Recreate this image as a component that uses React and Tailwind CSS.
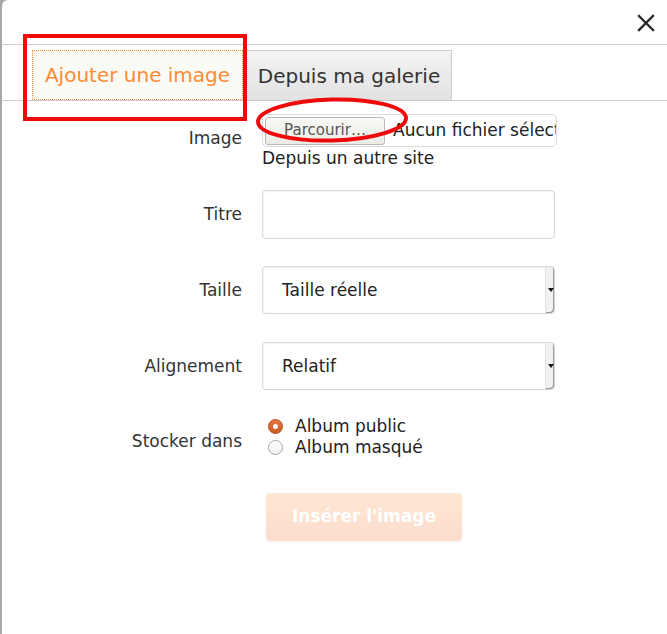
import React from 'react';

const font = { fontFamily: '"DejaVu Sans", "Noto Sans", sans-serif' };

const Label = ({ children, className = '' }) => (
    <div className={`w-[260px] shrink-0 pr-[20px] text-right text-[17px] text-[#333] ${className}`}>
        {children}
    </div>
);

const FakeSelect = ({ value }) => (
    <div className="flex h-[48px] w-[293px] items-center rounded-[4px] border border-[#d8d8d8] bg-white shadow-[inset_0_1px_2px_rgba(0,0,0,0.06)]">
        <span className="flex-1 pl-[19px] pt-[2px] text-[17px] text-[#222]">{value}</span>
        <div className="relative h-full w-[9px] rounded-r-[4px] border-l border-[#e2e2e2] bg-[#f2f2f2] shadow-[inset_-1px_-1px_0_#9a9a9a]">
            <span className="absolute left-[2px] top-1/2 -translate-y-1/2 border-x-[3px] border-t-[4px] border-x-transparent border-t-[#111]" />
        </div>
    </div>
);

export default function App() {
    return (
        <div className="relative flex h-[634px] w-[667px] overflow-hidden bg-[#a8a8a8]" style={font}>
            {/* page behind the modal */}
            <div className="w-[2px] shrink-0 bg-[#a8a8a8]" />

            {/* Modal */}
            <div className="flex flex-1 flex-col rounded-tl-[6px] bg-white">
                {/* Header */}
                <div className="flex h-[45px] shrink-0 items-center justify-end border-b border-[#cccccc] pr-[10px]">
                    <svg width="18" height="18" viewBox="0 0 18 18" className="mr-[2px] mt-[1px]">
                        <path d="M2 2 L16 16 M16 2 L2 16" stroke="#2b2b2b" strokeWidth="2.4" strokeLinecap="square" />
                    </svg>
                </div>

                {/* Tabs */}
                <div className="mt-[5px] flex h-[51px] items-end border-b border-[#cccccc] pl-[30px]">
                    <div className="flex h-[50px] w-[211px] items-center justify-center bg-[#fbfbf6] outline-1 outline-dotted outline-[#f08a3a] -outline-offset-1">
                        <span className="text-[20px] text-[#ff8a33]">Ajouter une image</span>
                    </div>
                    <div className="ml-[3px] -mb-px flex h-[51px] w-[206px] items-center justify-center border border-[#cccccc] bg-gradient-to-b from-[#f3f3f3] to-[#e2e2e2]">
                        <span className="text-[20px] text-[#333]">Depuis ma galerie</span>
                    </div>
                </div>

                {/* Form */}
                <div className="flex flex-col">
                    {/* Image */}
                    <div className="mt-[13px] flex items-start">
                        <Label className="pt-[12px] leading-[24px]">Image</Label>
                        <div className="flex flex-col">
                            <div className="flex h-[33px] w-[295px] items-center overflow-hidden whitespace-nowrap rounded-[5px] border border-[#dcdcdc] bg-white pl-[2px]">
                                <div className="flex h-[28px] w-[120px] shrink-0 items-center justify-center rounded-[3px] border border-[#b9b9b9] bg-gradient-to-b from-[#f8f8f4] to-[#ecece6] pb-[1px] text-[15px] text-[#555]">
                                    Parcourir…
                                </div>
                                <span className="ml-[8px] text-[17px] text-[#222]">Aucun fichier sélect</span>
                            </div>
                            <span className="text-[17px] leading-[22px] text-[#222]">Depuis un autre site</span>
                        </div>
                    </div>

                    {/* Titre */}
                    <div className="mt-[21px] flex items-center">
                        <Label>Titre</Label>
                        <div className="h-[49px] w-[293px] rounded-[4px] border border-[#d8d8d8] bg-white shadow-[inset_0_1px_2px_rgba(0,0,0,0.06)]" />
                    </div>

                    {/* Taille */}
                    <div className="mt-[27px] flex items-center">
                        <Label className="pt-[2px]">Taille</Label>
                        <FakeSelect value="Taille réelle" />
                    </div>

                    {/* Alignement */}
                    <div className="mt-[28px] flex items-center">
                        <Label className="pt-[2px]">Alignement</Label>
                        <FakeSelect value="Relatif" />
                    </div>

                    {/* Stocker dans */}
                    <div className="mt-[26px] flex items-start">
                        <Label className="pt-[13px] leading-[24px]">Stocker dans</Label>
                        <div className="flex flex-col text-[17px] leading-[21px] text-[#222]">
                            <div className="flex items-center">
                                <span className="ml-[6px] flex h-[15px] w-[15px] items-center justify-center rounded-full border border-[#b44d1c] bg-gradient-to-b from-[#e8763f] to-[#c95a26]">
                                    <span className="h-[5px] w-[5px] rounded-full bg-white" />
                                </span>
                                <span className="ml-[12px]">Album public</span>
                            </div>
                            <div className="flex items-center">
                                <span className="ml-[6px] h-[15px] w-[15px] rounded-full border border-[#a6a6a6] bg-gradient-to-b from-white to-[#f1f1f1]" />
                                <span className="ml-[12px]">Album masqué</span>
                            </div>
                        </div>
                    </div>

                    {/* Submit */}
                    <div className="mt-[35px] flex">
                        <div className="w-[260px] shrink-0" />
                        <div className="ml-[4px] flex h-[48px] w-[196px] items-center justify-center rounded-[4px] bg-gradient-to-b from-[#fee8d3] to-[#fcdccd] text-[17px] font-bold text-white shadow-[0_1px_3px_rgba(0,0,0,0.06)]">
                            Insérer l'image
                        </div>
                    </div>
                </div>
            </div>

            {/* Red annotations */}
            <div className="pointer-events-none absolute left-[23px] top-[34px] h-[87px] w-[224px] border-[4px] border-[#ee0a0a]" />
            <svg className="pointer-events-none absolute left-0 top-0" width="667" height="634">
                <ellipse cx="332" cy="120" rx="74" ry="20.5" fill="none" stroke="#ee0a0a" strokeWidth="4" transform="rotate(-1.5 332 120)" />
            </svg>
        </div>
    );
}
